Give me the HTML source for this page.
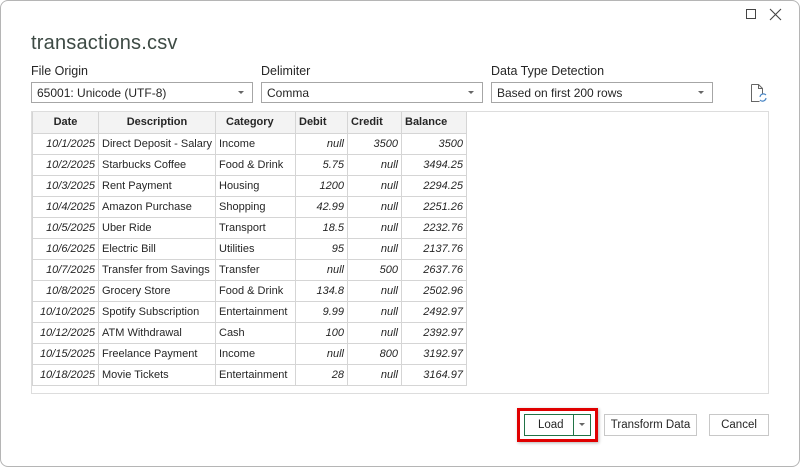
<!DOCTYPE html>
<html><head><meta charset="utf-8"><style>
*{box-sizing:border-box;margin:0;padding:0}
body{width:800px;height:467px;background:#fff;font-family:"Liberation Sans",sans-serif;color:#262626;position:relative;overflow:hidden}
.dlg{position:absolute;left:0;top:0;width:800px;height:467px;border:1px solid #b5b5b5;border-radius:8px;background:#fff}
.a{position:absolute}
.title{left:31px;top:32px;font-size:20px;color:#3d4a44;letter-spacing:0.2px}
.lbl{font-size:12.5px;top:64px;color:#262626}
.dd{top:82px;height:21px;border:1px solid #a6a6a6;font-size:12px;padding:3px 0 0 5px}
.dd:after{content:"";position:absolute;right:8px;top:8px;border-left:3px solid transparent;border-right:3px solid transparent;border-top:3px solid #666}
.prev{left:31px;top:111px;width:738px;height:283px;border:1px solid #ddd}
table{position:absolute;left:32px;top:112px;border-collapse:collapse;font-size:11px;table-layout:fixed;width:435px}
td,th{border:1px solid #d5d5d5;height:21px;padding:0 3px;white-space:nowrap;overflow:hidden}
th{background:#f3f3f3;font-weight:bold;border-top:none;text-align:left}
td.i{font-style:italic;text-align:right}
.btn{top:414px;height:22px;border:1px solid #c8c8c8;font-size:11.5px;text-align:center;line-height:20px}
</style></head><body>
<div class="dlg"></div>
<div class="a" style="left:746px;top:9px;width:10px;height:10px;border:1px solid #444"></div>
<svg class="a" style="left:769px;top:8px" width="13" height="13" viewBox="0 0 13 13"><path d="M1 1L12 12M12 1L1 12" stroke="#444" stroke-width="1.1"/></svg>
<div class="a title">transactions.csv</div>
<div class="a lbl" style="left:31px">File Origin</div>
<div class="a lbl" style="left:261px">Delimiter</div>
<div class="a lbl" style="left:491px">Data Type Detection</div>
<div class="a dd" style="left:31px;width:222px">65001: Unicode (UTF-8)</div>
<div class="a dd" style="left:261px;width:222px">Comma</div>
<div class="a dd" style="left:491px;width:222px">Based on first 200 rows</div>
<svg class="a" style="left:750px;top:83px" width="18" height="20" viewBox="0 0 18 20"><path d="M1.5 1.5h7l4 4v6M1.5 1.5v17h8" fill="none" stroke="#666"/><path d="M8.5 1.5v4h4" fill="none" stroke="#666"/><path d="M10 14a3.5 3.5 0 0 1 6-2M16 15a3.5 3.5 0 0 1-6 2" fill="none" stroke="#4a86c5" stroke-width="1.2"/></svg>
<div class="a prev"></div>
<table>
<colgroup><col style="width:66px"><col style="width:117px"><col style="width:80px"><col style="width:52px"><col style="width:54px"><col style="width:65px"></colgroup>
<tr><th style="text-align:center">Date</th><th style="text-align:center">Description</th><th style="padding-left:10px">Category</th><th>Debit</th><th>Credit</th><th>Balance</th></tr>
<tr><td class="i">10/1/2025</td><td>Direct Deposit - Salary</td><td>Income</td><td class="i">null</td><td class="i">3500</td><td class="i">3500</td></tr>
<tr><td class="i">10/2/2025</td><td>Starbucks Coffee</td><td>Food &amp; Drink</td><td class="i">5.75</td><td class="i">null</td><td class="i">3494.25</td></tr>
<tr><td class="i">10/3/2025</td><td>Rent Payment</td><td>Housing</td><td class="i">1200</td><td class="i">null</td><td class="i">2294.25</td></tr>
<tr><td class="i">10/4/2025</td><td>Amazon Purchase</td><td>Shopping</td><td class="i">42.99</td><td class="i">null</td><td class="i">2251.26</td></tr>
<tr><td class="i">10/5/2025</td><td>Uber Ride</td><td>Transport</td><td class="i">18.5</td><td class="i">null</td><td class="i">2232.76</td></tr>
<tr><td class="i">10/6/2025</td><td>Electric Bill</td><td>Utilities</td><td class="i">95</td><td class="i">null</td><td class="i">2137.76</td></tr>
<tr><td class="i">10/7/2025</td><td>Transfer from Savings</td><td>Transfer</td><td class="i">null</td><td class="i">500</td><td class="i">2637.76</td></tr>
<tr><td class="i">10/8/2025</td><td>Grocery Store</td><td>Food &amp; Drink</td><td class="i">134.8</td><td class="i">null</td><td class="i">2502.96</td></tr>
<tr><td class="i">10/10/2025</td><td>Spotify Subscription</td><td>Entertainment</td><td class="i">9.99</td><td class="i">null</td><td class="i">2492.97</td></tr>
<tr><td class="i">10/12/2025</td><td>ATM Withdrawal</td><td>Cash</td><td class="i">100</td><td class="i">null</td><td class="i">2392.97</td></tr>
<tr><td class="i">10/15/2025</td><td>Freelance Payment</td><td>Income</td><td class="i">null</td><td class="i">800</td><td class="i">3192.97</td></tr>
<tr><td class="i">10/18/2025</td><td>Movie Tickets</td><td>Entertainment</td><td class="i">28</td><td class="i">null</td><td class="i">3164.97</td></tr>
</table>
<div class="a" style="left:517px;top:408px;width:81px;height:34px;border:3px solid #e00000;box-shadow:1px 1px 3px rgba(0,0,0,.3)"></div>
<div class="a btn" style="left:524px;width:67px;border-color:#217346;text-align:left;padding-left:13px">Load<span class="a" style="left:48px;top:0;height:20px;border-left:1px solid #217346"></span><span class="a" style="left:54px;top:8px;border-left:3px solid transparent;border-right:3px solid transparent;border-top:3px solid #666"></span></div>
<div class="a btn" style="left:604px;width:93px">Transform Data</div>
<div class="a btn" style="left:709px;width:60px">Cancel</div>
</body></html>
